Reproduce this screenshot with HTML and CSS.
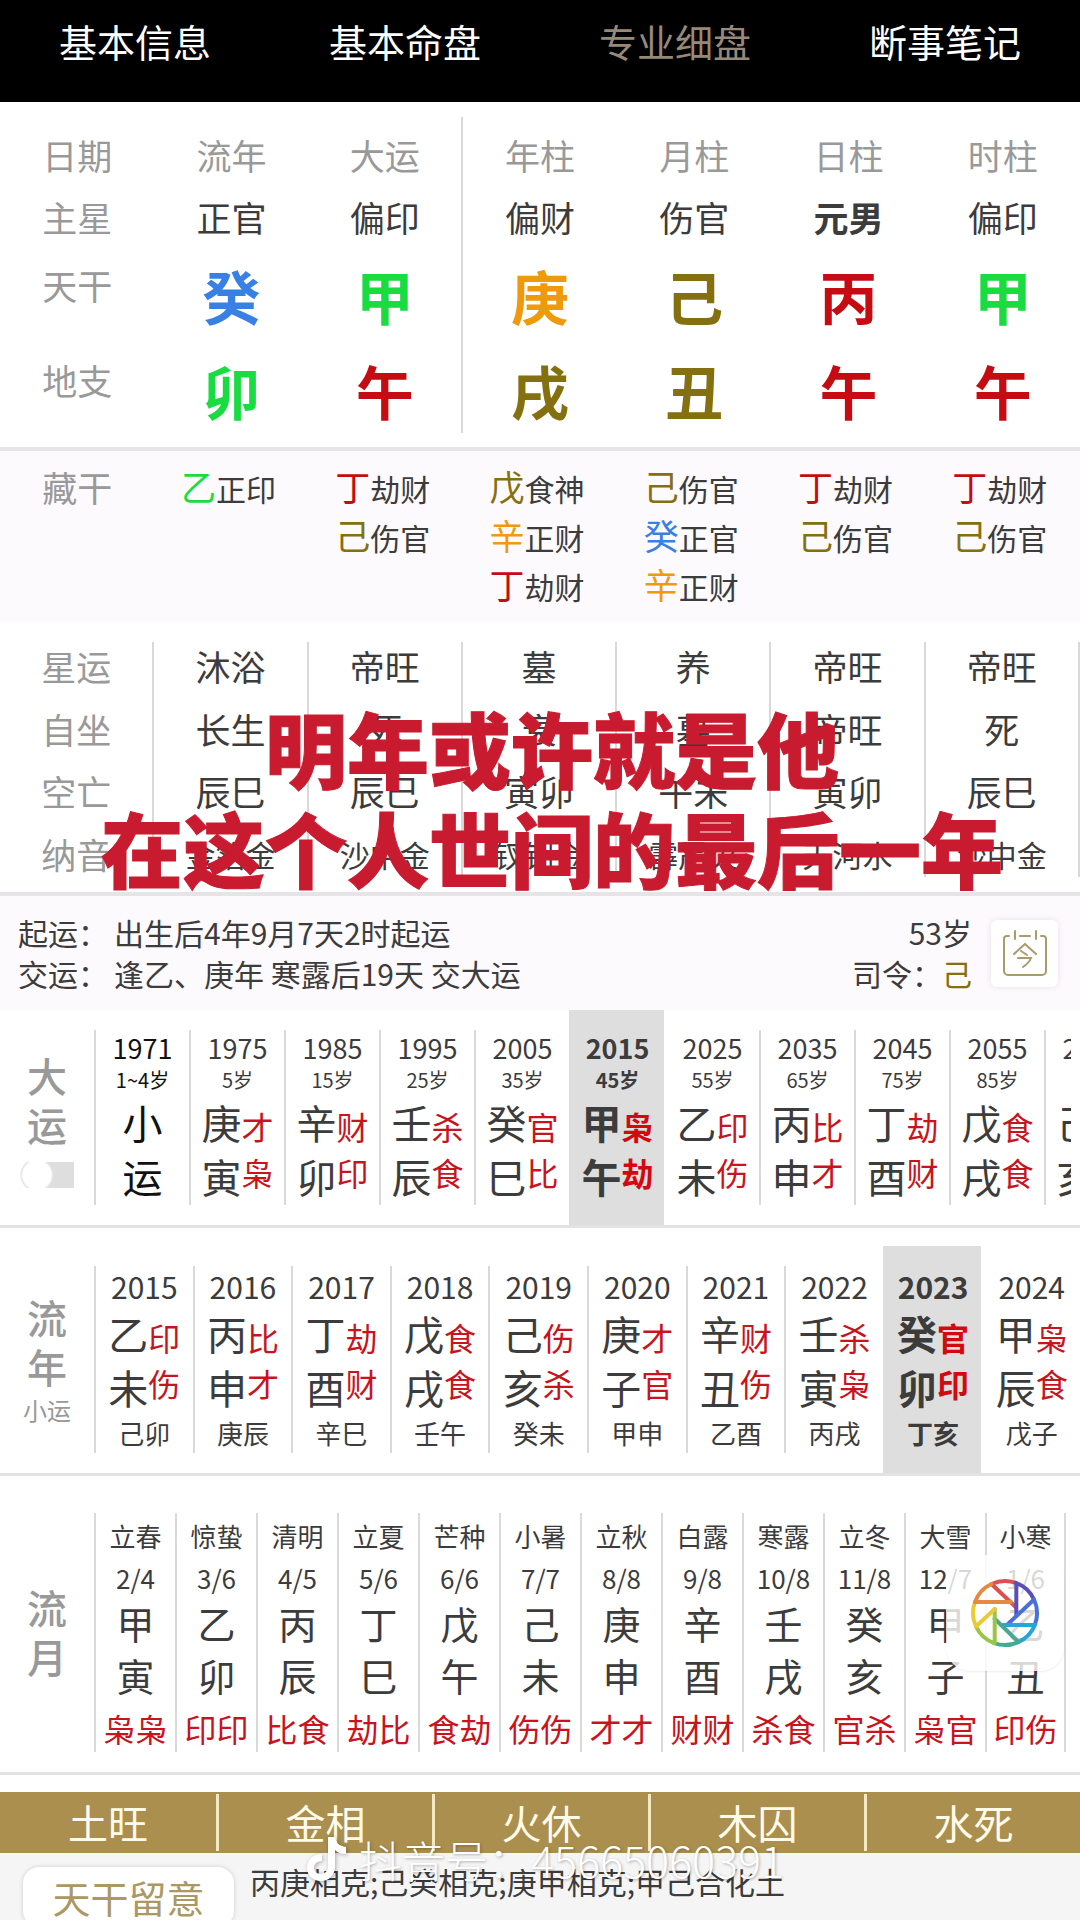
FILE: index.html
```html
<!DOCTYPE html>
<html lang="zh-CN">
<head>
<meta charset="utf-8">
<meta name="viewport" content="width=device-width, initial-scale=1">
<title>专业细盘</title>
<link rel="stylesheet" href="styles.css">
</head>
<body>
<div class="app">
  <nav class="tabs">
    <a href="#info">基本信息</a>
    <a href="#chart">基本命盘</a>
    <a href="#detail" class="current" aria-current="page">专业细盘</a>
    <a href="#notes">断事笔记</a>
  </nav>

  <main id="detail">
    <section class="pillars">
      <table class="chart chart-main">
        <tr class="head"><th>日期</th><th>流年</th><th>大运</th><th>年柱</th><th>月柱</th><th>日柱</th><th>时柱</th></tr>
        <tr class="star"><th>主星</th><td>正官</td><td>偏印</td><td>偏财</td><td>伤官</td><td class="strong">元男</td><td>偏印</td></tr>
        <tr class="stem"><th>天干</th><td class="water">癸</td><td class="wood">甲</td><td class="metal">庚</td><td class="earth">己</td><td class="fire">丙</td><td class="wood">甲</td></tr>
        <tr class="branch"><th>地支</th><td class="wood">卯</td><td class="fire">午</td><td class="earth">戌</td><td class="earth">丑</td><td class="fire">午</td><td class="fire">午</td></tr>
      </table>
    </section>

    <section class="hidden-stems">
      <table class="chart">
        <tr>
          <th>藏干</th>
          <td><p><b class="wood">乙</b>正印</p></td>
          <td><p><b class="fire">丁</b>劫财</p><p><b class="earth">己</b>伤官</p></td>
          <td><p><b class="earth">戊</b>食神</p><p><b class="metal">辛</b>正财</p><p><b class="fire">丁</b>劫财</p></td>
          <td><p><b class="earth">己</b>伤官</p><p><b class="water">癸</b>正官</p><p><b class="metal">辛</b>正财</p></td>
          <td><p><b class="fire">丁</b>劫财</p><p><b class="earth">己</b>伤官</p></td>
          <td><p><b class="fire">丁</b>劫财</p><p><b class="earth">己</b>伤官</p></td>
        </tr>
      </table>
    </section>

    <section class="phases">
      <table class="chart chart-lined">
        <tr class="first"><th>星运</th><td>沐浴</td><td>帝旺</td><td>墓</td><td>养</td><td>帝旺</td><td>帝旺</td></tr>
        <tr><th>自坐</th><td>长生</td><td>死</td><td>衰</td><td>墓</td><td>帝旺</td><td>死</td></tr>
        <tr><th>空亡</th><td>辰巳</td><td>辰巳</td><td>寅卯</td><td>午未</td><td>寅卯</td><td>辰巳</td></tr>
        <tr class="last"><th>纳音</th><td>金箔金</td><td>沙中金</td><td>钗钏金</td><td>霹雳火</td><td>天河水</td><td>沙中金</td></tr>
      </table>
      <p class="caption">明年或许就是他<br>在这个人世间的最后一年</p>
    </section>

    <section class="start">
      <div class="start-text">
        <p><span>起运：</span>出生后4年9月7天2时起运</p>
        <p><span>交运：</span>逢乙、庚年 寒露后19天 交大运</p>
      </div>
      <div class="start-age">
        <p>53岁</p>
        <p>司令：<span class="earth">己</span></p>
      </div>
      <button class="today" type="button" aria-label="今天">
        <svg viewBox="0 0 44 46" width="44" height="46" fill="none" stroke="#a89c6c" stroke-width="2" stroke-linecap="round">
          <path d="M6 6H4a3 3 0 0 0-3 3v32a4 4 0 0 0 4 4h34a4 4 0 0 0 4-4V9a3 3 0 0 0-3-3h-2M17 6h10M12 1v8M33 1v8"/>
          <path d="M22 14 11 24M22 14l11 10M18 21l6 4M15 28h13q-2 5-8 9"/>
        </svg>
      </button>
    </section>

    <section class="fortune decade">
      <div class="side"><h2>大<br>运</h2><input class="switch" type="checkbox" aria-label="显示小运"></div>
      <div class="cols">
        <button type="button" class="col minor"><span class="in"><span class="year">1971</span><span class="age">1~4岁</span><span class="pair"><span class="gz">小<br>运</span></span></span></button>
        <button type="button" class="col"><span class="in"><span class="year">1975</span><span class="age">5岁</span><span class="pair"><span class="gz">庚<br>寅</span><span class="ss">才<br>枭</span></span></span></button>
        <button type="button" class="col"><span class="in"><span class="year">1985</span><span class="age">15岁</span><span class="pair"><span class="gz">辛<br>卯</span><span class="ss">财<br>印</span></span></span></button>
        <button type="button" class="col"><span class="in"><span class="year">1995</span><span class="age">25岁</span><span class="pair"><span class="gz">壬<br>辰</span><span class="ss">杀<br>食</span></span></span></button>
        <button type="button" class="col"><span class="in"><span class="year">2005</span><span class="age">35岁</span><span class="pair"><span class="gz">癸<br>巳</span><span class="ss">官<br>比</span></span></span></button>
        <button type="button" class="col on"><span class="in"><span class="year">2015</span><span class="age">45岁</span><span class="pair"><span class="gz">甲<br>午</span><span class="ss">枭<br>劫</span></span></span></button>
        <button type="button" class="col"><span class="in"><span class="year">2025</span><span class="age">55岁</span><span class="pair"><span class="gz">乙<br>未</span><span class="ss">印<br>伤</span></span></span></button>
        <button type="button" class="col"><span class="in"><span class="year">2035</span><span class="age">65岁</span><span class="pair"><span class="gz">丙<br>申</span><span class="ss">比<br>才</span></span></span></button>
        <button type="button" class="col"><span class="in"><span class="year">2045</span><span class="age">75岁</span><span class="pair"><span class="gz">丁<br>酉</span><span class="ss">劫<br>财</span></span></span></button>
        <button type="button" class="col"><span class="in"><span class="year">2055</span><span class="age">85岁</span><span class="pair"><span class="gz">戊<br>戌</span><span class="ss">食<br>食</span></span></span></button>
        <button type="button" class="col"><span class="in"><span class="year">2065</span><span class="age">95岁</span><span class="pair"><span class="gz">己<br>亥</span><span class="ss">伤<br>杀</span></span></span></button>
      </div>
    </section>

    <section class="fortune annual">
      <div class="side"><h2>流<br>年</h2><p>小运</p></div>
      <div class="cols">
        <button type="button" class="col"><span class="in"><span class="year">2015</span><span class="pair"><span class="gz">乙<br>未</span><span class="ss">印<br>伤</span></span><span class="sub">己卯</span></span></button>
        <button type="button" class="col"><span class="in"><span class="year">2016</span><span class="pair"><span class="gz">丙<br>申</span><span class="ss">比<br>才</span></span><span class="sub">庚辰</span></span></button>
        <button type="button" class="col"><span class="in"><span class="year">2017</span><span class="pair"><span class="gz">丁<br>酉</span><span class="ss">劫<br>财</span></span><span class="sub">辛巳</span></span></button>
        <button type="button" class="col"><span class="in"><span class="year">2018</span><span class="pair"><span class="gz">戊<br>戌</span><span class="ss">食<br>食</span></span><span class="sub">壬午</span></span></button>
        <button type="button" class="col"><span class="in"><span class="year">2019</span><span class="pair"><span class="gz">己<br>亥</span><span class="ss">伤<br>杀</span></span><span class="sub">癸未</span></span></button>
        <button type="button" class="col"><span class="in"><span class="year">2020</span><span class="pair"><span class="gz">庚<br>子</span><span class="ss">才<br>官</span></span><span class="sub">甲申</span></span></button>
        <button type="button" class="col"><span class="in"><span class="year">2021</span><span class="pair"><span class="gz">辛<br>丑</span><span class="ss">财<br>伤</span></span><span class="sub">乙酉</span></span></button>
        <button type="button" class="col"><span class="in"><span class="year">2022</span><span class="pair"><span class="gz">壬<br>寅</span><span class="ss">杀<br>枭</span></span><span class="sub">丙戌</span></span></button>
        <button type="button" class="col on"><span class="in"><span class="year">2023</span><span class="pair"><span class="gz">癸<br>卯</span><span class="ss">官<br>印</span></span><span class="sub">丁亥</span></span></button>
        <button type="button" class="col"><span class="in"><span class="year">2024</span><span class="pair"><span class="gz">甲<br>辰</span><span class="ss">枭<br>食</span></span><span class="sub">戊子</span></span></button>
      </div>
    </section>

    <section class="fortune monthly">
      <div class="side"><h2>流<br>月</h2></div>
      <div class="cols">
        <button type="button" class="col"><span class="in"><span class="term">立春</span><span class="date">2/4</span><span class="gz">甲<br>寅</span><span class="ss">枭枭</span></span></button>
        <button type="button" class="col"><span class="in"><span class="term">惊蛰</span><span class="date">3/6</span><span class="gz">乙<br>卯</span><span class="ss">印印</span></span></button>
        <button type="button" class="col"><span class="in"><span class="term">清明</span><span class="date">4/5</span><span class="gz">丙<br>辰</span><span class="ss">比食</span></span></button>
        <button type="button" class="col"><span class="in"><span class="term">立夏</span><span class="date">5/6</span><span class="gz">丁<br>巳</span><span class="ss">劫比</span></span></button>
        <button type="button" class="col"><span class="in"><span class="term">芒种</span><span class="date">6/6</span><span class="gz">戊<br>午</span><span class="ss">食劫</span></span></button>
        <button type="button" class="col"><span class="in"><span class="term">小暑</span><span class="date">7/7</span><span class="gz">己<br>未</span><span class="ss">伤伤</span></span></button>
        <button type="button" class="col"><span class="in"><span class="term">立秋</span><span class="date">8/8</span><span class="gz">庚<br>申</span><span class="ss">才才</span></span></button>
        <button type="button" class="col"><span class="in"><span class="term">白露</span><span class="date">9/8</span><span class="gz">辛<br>酉</span><span class="ss">财财</span></span></button>
        <button type="button" class="col"><span class="in"><span class="term">寒露</span><span class="date">10/8</span><span class="gz">壬<br>戌</span><span class="ss">杀食</span></span></button>
        <button type="button" class="col"><span class="in"><span class="term">立冬</span><span class="date">11/8</span><span class="gz">癸<br>亥</span><span class="ss">官杀</span></span></button>
        <button type="button" class="col"><span class="in"><span class="term">大雪</span><span class="date">12/7</span><span class="gz">甲<br>子</span><span class="ss">枭官</span></span></button>
        <button type="button" class="col"><span class="in"><span class="term">小寒</span><span class="date">1/6</span><span class="gz">乙<br>丑</span><span class="ss">印伤</span></span></button>
      </div>
      <button class="float" type="button" aria-label="快捷工具">
        <svg viewBox="0 0 70 70" width="70" height="70" fill="none" stroke-width="4" stroke-linecap="round">
          <path stroke="#dd4f52" d="M21.5 6A32 32 0 0 1 45.9 4.9M21.5 6 45.7 29"/>
          <path stroke="#5a4fb8" d="M45.9 4.9A32 32 0 0 1 64 21.5M46.3 5V37"/>
          <path stroke="#4b6fd8" d="M64 21.5A32 32 0 0 1 65.1 45.9M64 21.5 38 46"/>
          <path stroke="#27a5d8" d="M65.1 46.5A32 32 0 0 1 48.5 64M65 47H33"/>
          <path stroke="#43aa94" d="M48.5 64A32 32 0 0 1 24.1 65.1M48.5 64 24.7 40.7"/>
          <path stroke="#9cc544" d="M24.1 65.1A32 32 0 0 1 6 48.5M24.7 65V31"/>
          <path stroke="#e8cb36" d="M6 48.5A32 32 0 0 1 4.9 24.1M6 48.5 24.7 31"/>
          <path stroke="#e48a45" d="M4.9 24.1A32 32 0 0 1 21.5 6M5 24H41"/>
        </svg>
      </button>
    </section>

    <ul class="elements">
      <li>土旺</li><li>金相</li><li>火休</li><li>木囚</li><li>水死</li>
    </ul>

    <section class="remarks">
      <button class="remark-tab" type="button">天干留意</button>
      <p>丙庚相克;己癸相克;庚甲相克;甲己合化土</p>
      <div class="watermark">
        <svg viewBox="0 0 40 44" width="40" height="44" fill="#fff">
          <path d="M21 0h7c1 6 4 9 11 10v7c-4 0-8-1-11-4v16c0 9-6 15-14 15S0 38 0 31c0-8 6-14 15-14v7c-5 0-8 3-8 7 0 3 3 6 7 6s7-3 7-8z"/>
        </svg>
        <span>抖音号：45665060391</span>
      </div>
    </section>
  </main>
</div>
</body>
</html>
```
FILE: styles.css
```css
* { box-sizing: border-box; }

body {
  margin: 0;
  background: #fff;
  color: #3c3c3c;
  font-family: "Noto Sans CJK SC", "Noto Sans", sans-serif;
}

p, h2, ul { margin: 0; padding: 0; }

button {
  border: 0;
  padding: 0;
  background: none;
  color: inherit;
  font: inherit;
}

.app { height: 100vh; overflow: hidden; }

.wood { color: #18dc40; }
.fire { color: #c40c12; }
.earth { color: #85700f; }
.metal { color: #ee9a0c; }
.water { color: #3880e4; }

/* top tabs */
.tabs {
  display: grid;
  grid-template-columns: repeat(4, 1fr);
  height: 102px;
  background: #000;
}
.tabs a {
  color: #fff;
  font-size: 38px;
  line-height: 82px;
  text-align: center;
  text-decoration: none;
}
.tabs .current { color: #978979; }

/* chart tables */
.chart {
  width: 100%;
  table-layout: fixed;
  border-collapse: separate;
  border-spacing: 0;
}
.chart th, .chart td {
  height: 62px;
  padding: 0 0 4px;
  font-size: 35px;
  line-height: 48px;
  font-weight: 400;
  text-align: center;
}
.chart th { color: #999; }

.pillars { padding: 15px 0 14px; border-bottom: 4px solid #e6e4e7; }
.chart-main tr > :nth-child(3) { border-right: 2px solid #d9d9d9; }
.chart-main .head th { height: 71px; padding: 5px 0 0; }
.chart-main .strong { font-weight: 700; }
.chart-main .stem > * { height: 96px; }
.chart-main .branch > * { height: 87px; }
.chart-main .stem td, .chart-main .branch td {
  font-size: 58px;
  line-height: 72px;
  font-weight: 700;
}
.chart-main .stem td { padding-bottom: 6px; }
.chart-main .branch td { padding: 1px 0 0; }
.chart-main .stem th { padding-bottom: 26px; }
.chart-main .branch th { padding-bottom: 20px; }

.hidden-stems { padding: 13px 0 11px; background: #fdfafd; }
.hidden-stems .chart th, .hidden-stems .chart td { padding: 0; vertical-align: top; }
.hidden-stems .chart th { line-height: 45px; }
.hidden-stems .chart td { padding-right: 6px; }
.hidden-stems p { height: 49px; font-size: 30px; line-height: 49px; }
.hidden-stems b { font-size: 35px; line-height: 40px; font-weight: 400; }

.phases {
  position: relative;
  padding: 20px 0 15px;
  border-bottom: 4px solid #e6e4e7;
}
.chart-lined th, .chart-lined td { border-right: 2px solid #d9d9d9; }
.chart-lined .first > * { height: 58px; padding-bottom: 10px; }
.chart-lined .last > * { height: 53px; padding: 7px 0 0; line-height: 40px; }
.chart-lined .last td { font-size: 30px; }

.caption {
  position: absolute;
  inset: 75px 0 auto 24px;
  color: #c91b2f;
  font-size: 82px;
  line-height: 100px;
  font-weight: 900;
  text-align: center;
  white-space: nowrap;
  -webkit-text-stroke: 1px #c91b2f;
}

/* start of fortune */
.start {
  display: flex;
  align-items: center;
  padding: 16px 22px 16px 18px;
  background: #fdfafd;
  font-size: 30px;
  line-height: 41px;
}
.start-text { flex: 1; }
.start-text span { margin-right: 6px; }
.start-age { text-align: right; }
.today {
  display: grid;
  place-items: center;
  width: 67px;
  height: 67px;
  margin-left: 19px;
  border-radius: 6px;
  background: #fff;
  box-shadow: 0 0 6px #e6e0e6;
}

/* fortune rows */
.fortune {
  display: flex;
  position: relative;
  border-bottom: 3px solid #e4e2e4;
}
.side {
  display: flex;
  flex: none;
  flex-direction: column;
  align-items: center;
  width: 94px;
  color: #999;
}
.side h2 { font-size: 40px; line-height: 49px; font-weight: 500; }
.side p { font-size: 24px; line-height: 37px; }
.cols { display: grid; flex: 1; min-width: 0; }
.col { padding: 20px 0; text-align: center; }
.in { display: block; border-left: 2px solid #d9d9d9; padding-bottom: 2px; }
.year, .age, .sub, .term, .date, .gz, .ss { display: block; white-space: nowrap; }
.pair { display: flex; align-items: center; justify-content: center; }
.gz { font-size: 40px; line-height: 54px; }
.ss { color: #c8141c; font-size: 32px; line-height: 46px; }
.on { background: #dedede; font-weight: 700; }
.on .ss { color: #d40810; }
.on .in, .on + .col .in { border-color: transparent; }

.decade .side { padding-top: 41px; }
.decade .cols {
  grid-auto-flow: column;
  grid-auto-columns: 95px;
  margin-right: 9px;
  overflow: hidden;
}
.decade .year { font-size: 27px; line-height: 36px; }
.decade .age { font-size: 20px; line-height: 28px; }
.decade .pair { height: 109px; }
.minor { color: #111; }

.switch {
  appearance: none;
  width: 54px;
  height: 26px;
  margin: 13px 0 0;
  background:
    radial-gradient(circle at 17px 13px, #fff 14px, #e2e2e2 16px, transparent 17px),
    linear-gradient(90deg, transparent 28px, #dedede 28px);
}

.annual .side { padding-top: 65px; }
.annual .cols { grid-template-columns: repeat(10, 1fr); margin-top: 18px; }
.annual .year { font-size: 30px; line-height: 40px; }
.annual .sub { font-size: 26px; line-height: 37px; }

.monthly .side { padding-top: 107px; }
.monthly .cols {
  grid-template-columns: repeat(12, 1fr);
  margin: 17px 14px 0 0;
}
.monthly .col:nth-child(12) .in { border-right: 2px solid #d9d9d9; }
.monthly .term { font-size: 26px; line-height: 46px; }
.monthly .date { font-size: 26px; line-height: 38px; }
.monthly .gz { font-size: 38px; line-height: 52px; }
.monthly .ss { padding-top: 5px; line-height: 44px; }

.float {
  display: grid;
  place-items: center;
  position: absolute;
  top: 79px;
  right: 16px;
  width: 118px;
  height: 116px;
  border-radius: 24px;
  background: rgba(255, 255, 255, .8);
  box-shadow: 0 1px 2px rgba(0, 0, 0, .08);
}

/* five elements bar */
.elements {
  display: grid;
  grid-template-columns: repeat(5, 1fr);
  margin-top: 17px;
  padding: 2px 0;
  background: #ab8f4f;
  color: #fffbea;
  font-size: 40px;
  line-height: 57px;
  list-style: none;
  text-align: center;
}
.elements li + li { border-left: 3px solid #f5e9c4; }

.remarks {
  display: flex;
  position: relative;
  gap: 16px;
  height: 90px;
  padding: 14px 0 0 23px;
  background: #f5f5f5;
  font-size: 30px;
  line-height: 28px;
}
.remark-tab {
  width: 211px;
  height: 60px;
  border-radius: 16px;
  background: #fff;
  box-shadow: 0 0 4px #ccc;
  color: #ab9864;
  font-size: 38px;
  line-height: 56px;
}
.watermark {
  display: flex;
  position: absolute;
  top: -18px;
  left: 307px;
  gap: 12px;
  align-items: center;
  color: #fff;
  font-size: 43px;
  line-height: 48px;
  font-weight: 300;
  text-shadow: 1px 1px 3px rgba(0, 0, 0, .3);
}
.watermark svg { filter: drop-shadow(1px 1px 2px rgba(0, 0, 0, .3)); }
```
